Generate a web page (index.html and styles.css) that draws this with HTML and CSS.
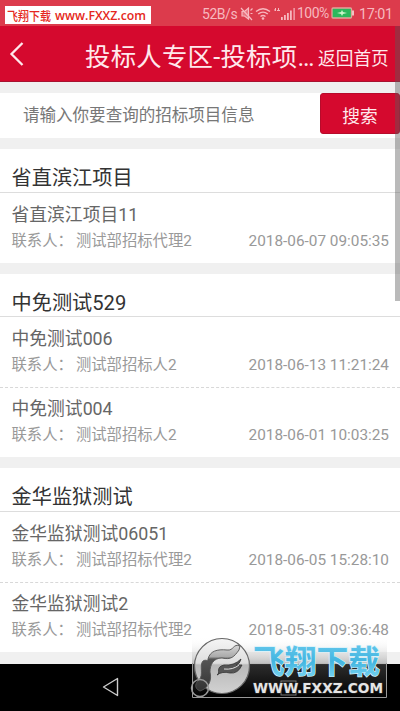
FILE: index.html
```html
<!DOCTYPE html>
<html lang="zh-CN">
<head>
<meta charset="utf-8">
<title>投标人专区</title>
<link rel="stylesheet" href="styles.css">
</head>
<body>
<div class="phone">
  <div class="status">
    <div class="site-tag"><svg width="146" height="18" viewBox="0 0 146 18"><text class="tag-cn" x="2" y="14.500" textLength="44" lengthAdjust="spacingAndGlyphs">飞翔下载</text><text class="tag-url" x="50" y="14" textLength="91" lengthAdjust="spacingAndGlyphs">www.FXXZ.com</text></svg></div>
    <span class="speed">52B/s</span>
    <svg class="icons" width="56" height="16" viewBox="0 0 56 16">
      <g fill="none" stroke="#f7b8bf" stroke-width="1.2">
        <path d="M2 5.5h2.500L8.500 2v11L4.500 10H2z" fill="#f7b8bf" fill-opacity=".45"/>
        <path d="M1 2l11 12M10.500 4.500l2-2M10.500 7.500h2"/>
        <path d="M16 5.500q7-5.500 14 0M18.200 8q4.800-3.800 9.600 0M20.500 10.500q2.500-2 5 0" stroke-width="1.400"/>
      </g>
      <circle cx="23" cy="12.500" r="1.300" fill="#f7b8bf"/>
      <path d="M35.500 2v3M34 4h2M38.500 2v3M37 4.500h3" stroke="#f7b8bf" stroke-width="1"/>
      <path d="M41 11h1.800v3H41zM44 9h1.800v5H44zM47 7h1.800v7H47zM50 4.500h1.800V14H50zM53.500 2h1.200v12h-1.200z" fill="#f7b8bf"/>
    </svg>
    <span class="percent">100%</span>
    <svg class="battery" width="24" height="12" viewBox="0 0 24 12"><rect x="1" y="1" width="19.500" height="10" rx="1" fill="#2cb85c" stroke="#e3a39b" stroke-width="1.300"/><path d="M21 3.500h2v5h-2z" fill="#f2c3c3"/><path d="M6 6l4-1 1-2 1 2 4 1-4 1-1 2-1-2z" fill="#c9f3c8"/></svg>
    <span class="clock">17:01</span>
  </div>
  <header class="header">
    <svg class="back" width="16" height="26" viewBox="0 0 16 26"><path d="M13.500 2L2.500 13l11 11" fill="none" stroke="#ffe8ec" stroke-width="2.300"/></svg>
    <h1>投标人专区-投标项…</h1>
    <a class="home">返回首页</a>
  </header>
  <main class="content">
    <form class="search"><span class="hint">请输入你要查询的招标项目信息</span><span class="button">搜索</span></form>
    <section class="group">
      <h2>省直滨江项目</h2>
      <article><h3>省直滨江项目11</h3><p><span>联系人：</span><span class="who">测试部招标代理2</span><time>2018-06-07 09:05:35</time></p></article>
    </section>
    <section class="group">
      <h2>中免测试529</h2>
      <article><h3>中免测试006</h3><p><span>联系人：</span><span class="who">测试部招标人2</span><time>2018-06-13 11:21:24</time></p></article>
      <article><h3>中免测试004</h3><p><span>联系人：</span><span class="who">测试部招标人2</span><time>2018-06-01 10:03:25</time></p></article>
    </section>
    <section class="group">
      <h2>金华监狱测试</h2>
      <article><h3>金华监狱测试06051</h3><p><span>联系人：</span><span class="who">测试部招标代理2</span><time>2018-06-05 15:28:10</time></p></article>
      <article><h3>金华监狱测试2</h3><p><span>联系人：</span><span class="who">测试部招标代理2</span><time>2018-05-31 09:36:48</time></p></article>
    </section>
  </main>
  <nav class="nav"><svg width="18" height="20" viewBox="0 0 18 20"><path d="M15.500 1.500v17L1.500 10z" fill="none" stroke="#ccc" stroke-width="1.400" stroke-linejoin="round"/></svg></nav>
  <div class="scrollbar"></div>
  <svg class="watermark" width="208" height="74" viewBox="0 0 208 74">
    <defs>
      <linearGradient id="shade" x2="0" y2="1"><stop offset="0" stop-color="#fff" stop-opacity="0"/><stop offset=".44" stop-color="#b5b5b5" stop-opacity=".8"/><stop offset=".46" stop-color="#444" stop-opacity=".65"/><stop offset="1" stop-color="#000" stop-opacity=".7"/></linearGradient>
      <linearGradient id="disc" x2="0" y2="1"><stop offset="0" stop-color="#f5f5f5"/><stop offset=".45" stop-color="#dedede"/><stop offset=".48" stop-color="#b8b8b8"/><stop offset="1" stop-color="#d2d2d2"/></linearGradient>
      <linearGradient id="bird" x2="0" y2="1"><stop offset="0" stop-color="#d5d5d5"/><stop offset=".25" stop-color="#aaa"/><stop offset=".3" stop-color="#555"/><stop offset="1" stop-color="#333"/></linearGradient>
      <linearGradient id="blue" x2="0" y2="1"><stop offset="0" stop-color="#72cef0"/><stop offset=".55" stop-color="#42b5e0"/><stop offset="1" stop-color="#83dbf5"/></linearGradient>
    </defs>
    <rect x="2" y="4" width="195" height="60" fill="url(#shade)"/>
    <path d="M2.500 30v34.500h194V30" fill="none" stroke="#999" stroke-width="1"/>
    <rect x="91" y="48" width="15" height="14" fill="none" stroke="#777"/>
    <circle cx="32" cy="33" r="27.500" fill="url(#disc)" stroke="#666" stroke-width="1.200"/>
    <path d="M10 58C3 55 6 49 9 47C14 42 9 32 13 28C16 26 18 29 18 26C20 18 27 16 37 17C44 18 43 10 50 13L49 17C44 24 41 27 32 25C23 25 20 32 20 39C22 47 19 55 10 58z" fill="url(#bird)" stroke="#555" stroke-width=".9"/>
    <path d="M27 42C31 40 25 34 34 32Q44 33 51 26Q50 31 46 32L52 32Q48 41 40 40Q32 38 27 42z" fill="#555" stroke="#333" stroke-width=".8"/>
    <path d="M34 36Q43 37 49 32" fill="none" stroke="#ddd" stroke-width="1"/>
    <circle cx="10" cy="55" r="8.500" fill="none" stroke="#999" stroke-width="1.500"/>
    <text class="mark-cn" x="63" y="40" textLength="127" lengthAdjust="spacingAndGlyphs">飞翔下载</text>
    <text class="mark-url" x="63" y="60" textLength="130" lengthAdjust="spacingAndGlyphs">WWW.FXXZ.COM</text>
  </svg>
</div>
</body>
</html>
```

FILE: styles.css
```css
* { box-sizing: border-box; }
body { margin: 0; font-family: Roboto, "Noto Sans CJK SC", sans-serif; background: #f0f0f0; }
h1, h2, h3, p { margin: 0; font-weight: 400; }
.phone { position: relative; width: 400px; height: 711px; overflow: hidden; display: flex; flex-direction: column; }
.status { height: 26px; flex: none; background: #dc3b4c; display: flex; align-items: center; color: #f7b8bf; font-size: 14px; white-space: nowrap; }
.site-tag { width: 146px; height: 18px; margin: 3px 0 0 5px; background: #fff; }
.site-tag svg { display: block; }
.tag-cn, .tag-url { fill: #e52720; font-size: 12px; }
.tag-cn { font-family: "Noto Sans CJK SC", sans-serif; font-weight: 500; }
.tag-url { font-family: "Open Sans", sans-serif; font-weight: 600; }
.speed { margin-left: 51px; width: 37px; padding-top: 2px; letter-spacing: -.45px; }
.icons { margin-left: 1px; margin-top: 1px; width: 56px; }
.percent { margin-left: 1px; width: 34px; font-size: 14px; letter-spacing: -.5px; }
.clock { margin-left: 4px; padding-top: 2px; font-size: 14.3px; letter-spacing: -.4px; }
.header { height: 56px; flex: none; background: #d5092e; border-bottom: 1px solid #a81331; color: #ffe8ec; display: flex; align-items: center; white-space: nowrap; padding-left: 9px; }
.header h1 { margin-left: 60px; width: 233px; font-size: 25.4px; letter-spacing: .25px; line-height: 54px; padding-top: 6px; }
.home { font-size: 17.7px; padding-top: 7px; }
.content { flex: 1; padding-top: 11px; }
.search { height: 45px; background: #fff; display: flex; justify-content: space-between; }
.hint { padding-left: 23px; line-height: 46px; font-size: 16.55px; color: #777; }
.button { width: 80px; height: 41px; border-radius: 3px; background: #d5092e; border: 1px solid #b70b2b; color: #ffe8ec; text-align: center; font-size: 17.7px; line-height: 46px; }
.group { margin-top: 11px; background: #fff; }
.group h2 { height: 43.5px; padding: 8px 11.5px 0; border-bottom: 1px solid #ddd; color: #333; font-size: 20.2px; line-height: 42px; }
article { height: 70px; padding: 8px 11px 0 11.5px; }
article + article { border-top: 1px dashed #d8d8d8; padding-top: 7px; }
article h3 { font-size: 17.8px; line-height: 28px; color: #666; }
article p { display: flex; font-size: 15.35px; line-height: 24px; color: #999; white-space: nowrap; }
.who { margin-left: 3px; }
time { margin-left: auto; }
.nav { height: 47px; flex: none; background: #000; padding: 13px 0 0 102px; }
.scrollbar { position: absolute; right: 0; top: 26px; width: 5px; height: 275px; background: rgba(90, 90, 90, .42); }
.watermark { position: absolute; left: 190px; top: 633px; }
.mark-cn { font-family: "Noto Sans CJK SC", sans-serif; font-size: 32px; font-weight: 700; fill: url(#blue); stroke: #d9f2fa; stroke-width: 1.4; paint-order: stroke; }
.mark-url { font-family: "DejaVu Sans", sans-serif; font-size: 14px; font-weight: 700; fill: #e5e5e5; stroke: #333; stroke-width: 1; paint-order: stroke; }
```
